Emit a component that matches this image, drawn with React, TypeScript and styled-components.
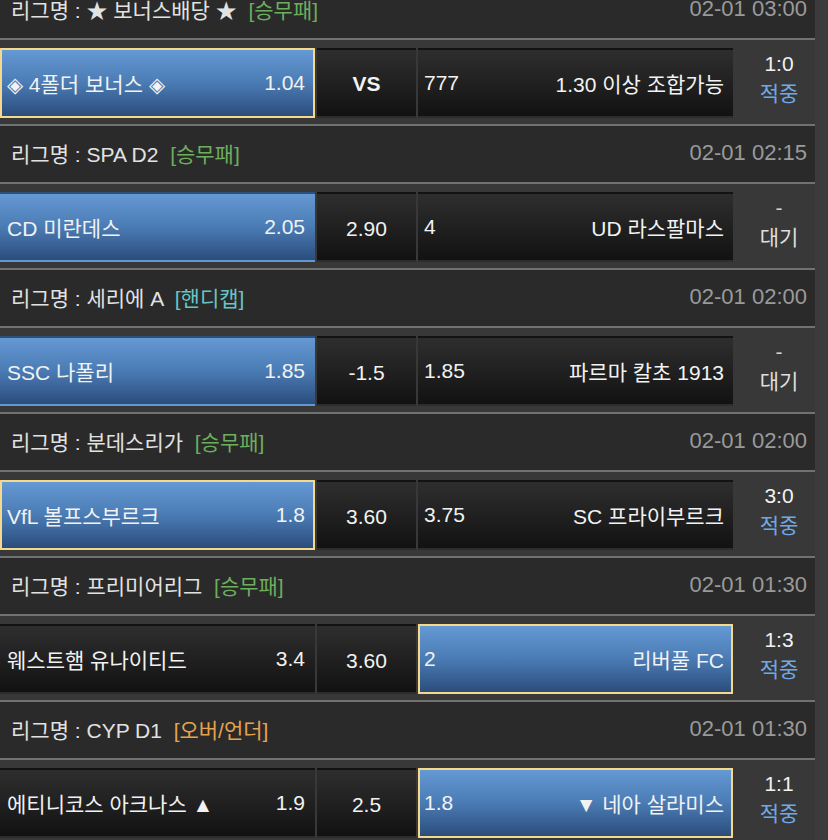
import * as React from 'react';
import styled, { createGlobalStyle } from 'styled-components';

type Tag = 'wdl' | 'hcp' | 'ou';

interface Side {
  name: string;
  odds: string;
  active?: boolean;
  picked?: boolean;
}

interface Match {
  league: string;
  tag: Tag;
  time: string;
  home: Side;
  mid: string;
  midBold?: boolean;
  away: Side;
  score: string;
  status: string;
  hit: boolean;
}

const TAG_LABEL: Record<Tag, string> = {
  wdl: '[승무패]',
  hcp: '[핸디캡]',
  ou: '[오버/언더]',
};

const TAG_COLOR: Record<Tag, string> = {
  wdl: '#6cae5c',
  hcp: '#68c4c6',
  ou: '#e7a24c',
};

const matches: Match[] = [
  {
    league: '★ 보너스배당 ★', tag: 'wdl', time: '02-01 03:00',
    home: { name: '◈ 4폴더 보너스 ◈', odds: '1.04', active: true, picked: true },
    mid: 'VS', midBold: true,
    away: { name: '1.30 이상 조합가능', odds: '777' },
    score: '1:0', status: '적중', hit: true,
  },
  {
    league: 'SPA D2', tag: 'wdl', time: '02-01 02:15',
    home: { name: 'CD 미란데스', odds: '2.05', active: true },
    mid: '2.90',
    away: { name: 'UD 라스팔마스', odds: '4' },
    score: '-', status: '대기', hit: false,
  },
  {
    league: '세리에 A', tag: 'hcp', time: '02-01 02:00',
    home: { name: 'SSC 나폴리', odds: '1.85', active: true },
    mid: '-1.5',
    away: { name: '파르마 칼초 1913', odds: '1.85' },
    score: '-', status: '대기', hit: false,
  },
  {
    league: '분데스리가', tag: 'wdl', time: '02-01 02:00',
    home: { name: 'VfL 볼프스부르크', odds: '1.8', active: true, picked: true },
    mid: '3.60',
    away: { name: 'SC 프라이부르크', odds: '3.75' },
    score: '3:0', status: '적중', hit: true,
  },
  {
    league: '프리미어리그', tag: 'wdl', time: '02-01 01:30',
    home: { name: '웨스트햄 유나이티드', odds: '3.4' },
    mid: '3.60',
    away: { name: '리버풀 FC', odds: '2', active: true, picked: true },
    score: '1:3', status: '적중', hit: true,
  },
  {
    league: 'CYP D1', tag: 'ou', time: '02-01 01:30',
    home: { name: '에티니코스 아크나스 ▲', odds: '1.9' },
    mid: '2.5',
    away: { name: '▼ 네아 살라미스', odds: '1.8', active: true, picked: true },
    score: '1:1', status: '적중', hit: true,
  },
];

const GlobalStyle = createGlobalStyle`
  html, body {
    margin: 0;
    padding: 0;
    background: #3b3b3b;
    overflow: hidden;
  }
  body {
    font-family: "Liberation Sans", "Noto Sans CJK KR", sans-serif;
    color: #f0f0f0;
  }
`;

const Board = styled.div`
  width: 815px;
  margin-top: -20px;
`;

const LeagueHeader = styled.div`
  box-sizing: border-box;
  height: 58px;
  border-top: 2px solid #727272;
  background: #2a2a2a;
  display: flex;
  align-items: center;
  justify-content: space-between;
  padding: 0 8px 2px 11px;
  font-size: 21px;
`;

const LeagueName = styled.span`
  color: #e2e2e2;
  white-space: pre;
`;

const TagLabel = styled.span<{ $tag: Tag }>`
  color: ${p => TAG_COLOR[p.$tag]};
`;

const Time = styled.span`
  color: #9a9a9a;
  font-size: 22px;
`;

const MatchRow = styled.div`
  box-sizing: border-box;
  height: 86px;
  border-top: 2px solid #727272;
  background: #383838;
  display: flex;
  gap: 2px;
  padding: 8px 0 6px;
`;

const Cell = styled.div<{ $active?: boolean; $picked?: boolean }>`
  box-sizing: border-box;
  height: 70px;
  display: flex;
  align-items: center;
  font-size: 21px;
  color: #f2f2f2;
  border: 2px solid ${p => (p.$picked ? '#f4d98c' : 'transparent')};
  background: ${p =>
    p.$active
      ? 'linear-gradient(to bottom, #6599d3 0%, #4a7bb4 50%, #2b4d7c 100%)'
      : 'linear-gradient(to bottom, #2e2e2e 0%, #1f1f1f 55%, #121212 100%)'};
`;

const TeamCell = styled(Cell)`
  width: 315px;
  justify-content: space-between;
  white-space: nowrap;
`;

const HomeCell = styled(TeamCell)`
  padding: 0 8px 0 5px;
`;

const AwayCell = styled(TeamCell)`
  padding: 0 7px 0 4px;
`;

const MidCell = styled(Cell)<{ $bold?: boolean }>`
  width: 99px;
  justify-content: center;
  font-weight: ${p => (p.$bold ? 700 : 400)};
  padding-top: ${p => (p.$bold ? 2 : 4)}px;
`;

const Result = styled.div`
  flex: 1;
  display: flex;
  flex-direction: column;
  align-items: center;
  justify-content: center;
  padding-left: 8px;
  padding-bottom: 8px;
  font-size: 21px;
  line-height: 30px;
`;

const Score = styled.span<{ $pending: boolean }>`
  color: ${p => (p.$pending ? '#cfcfcf' : '#f2f2f2')};
`;

const Status = styled.span<{ $hit: boolean }>`
  color: ${p => (p.$hit ? '#6fa9e6' : '#dedede')};
`;

export default function App() {
  return (
    <>
      <GlobalStyle />
      <Board>
        {matches.map((m, i) => (
          <React.Fragment key={i}>
            <LeagueHeader>
              <LeagueName>
                {'리그명 : ' + m.league + '  '}
                <TagLabel $tag={m.tag}>{TAG_LABEL[m.tag]}</TagLabel>
              </LeagueName>
              <Time>{m.time}</Time>
            </LeagueHeader>
            <MatchRow>
              <HomeCell $active={m.home.active} $picked={m.home.picked}>
                <span>{m.home.name}</span>
                <span>{m.home.odds}</span>
              </HomeCell>
              <MidCell $bold={m.midBold}>{m.mid}</MidCell>
              <AwayCell $active={m.away.active} $picked={m.away.picked}>
                <span>{m.away.odds}</span>
                <span>{m.away.name}</span>
              </AwayCell>
              <Result>
                <Score $pending={!m.hit}>{m.score}</Score>
                <Status $hit={m.hit}>{m.status}</Status>
              </Result>
            </MatchRow>
          </React.Fragment>
        ))}
      </Board>
    </>
  );
}
